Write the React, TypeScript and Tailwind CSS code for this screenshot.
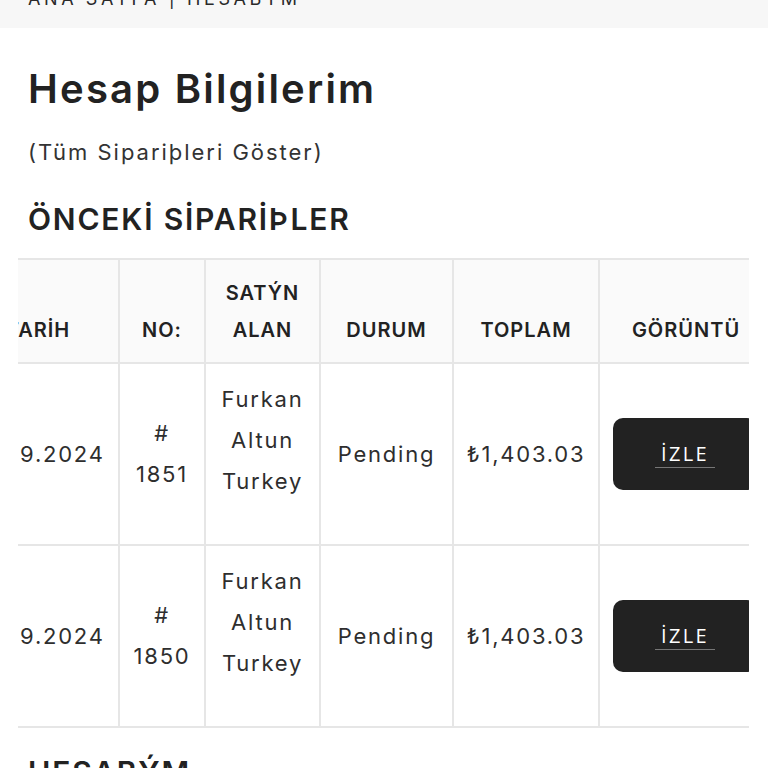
import { Fragment } from "react";

const orders = [
  { date: "18.09.2024", no: "1851", buyer: ["Furkan", "Altun", "Turkey"], status: "Pending", total: "₺1,403.03" },
  { date: "18.09.2024", no: "1850", buyer: ["Furkan", "Altun", "Turkey"], status: "Pending", total: "₺1,403.03" },
];

const headCell = "border-2 border-[#e6e6e6] bg-[#fafafa] px-[12px] pt-[14px] pb-[13px] align-bottom text-[20px] font-semibold uppercase leading-[37px] tracking-[0.05em] text-[#222]";
const bodyCell = "border-2 border-[#e6e6e6] px-[10px] py-[14px] text-center align-middle text-[22px] leading-[41px] tracking-[0.08em] text-[#2e2e2e]";

export default function App() {
  return (
    <div className="min-h-screen bg-white font-['Inter','Noto_Sans','DejaVu_Sans',sans-serif] text-[#222]">
      <div className="h-[28px] overflow-hidden bg-[#f7f7f7]">
        <p className="-mt-[10px] pl-[28px] text-[18px] leading-none tracking-[0.2em] text-[#2a2a2a]">ANA SAYFA | HESABÝM</p>
      </div>

      <main className="px-[28px] pt-[37px]">
        <h1 className="text-[40px] font-semibold leading-[48px] tracking-[0.055em] text-[#222]">Hesap Bilgilerim</h1>
        <p className="mt-[23px] text-[22px] leading-[33px] tracking-[0.09em] text-[#333]">(Tüm Sipariþleri Göster)</p>
        <h2 className="mt-[31px] text-[30px] font-semibold leading-[38px] tracking-[0.06em] text-[#222]">ÖNCEKİ SİPARİÞLER</h2>

        <div className="-ml-[10px] -mr-[9px] mt-[20px] overflow-hidden">
          <table className="-ml-[62px] w-[816px] table-fixed border-collapse border-t-2 border-[#e6e6e6]">
            <colgroup>
              <col className="w-[162px]" />
              <col className="w-[86px]" />
              <col className="w-[115px]" />
              <col className="w-[133px]" />
              <col className="w-[146px]" />
              <col className="w-[174px]" />
            </colgroup>
            <thead>
              <tr className="h-[104px]">
                <th className={headCell}>TARİH</th>
                <th className={headCell}>NO:</th>
                <th className={headCell}>SATÝN<br />ALAN</th>
                <th className={headCell}>DURUM</th>
                <th className={headCell}>TOPLAM</th>
                <th className={headCell}>GÖRÜNTÜ</th>
              </tr>
            </thead>
            <tbody>
              {orders.map((o) => (
                <tr key={o.no} className="h-[182px]">
                  <td className={bodyCell}>{o.date}</td>
                  <td className={bodyCell}>
                    <span className="block">#</span>
                    <span className="block">{o.no}</span>
                  </td>
                  <td className={`${bodyCell} pb-[42px]`}>
                    {o.buyer.map((line) => (
                      <Fragment key={line}>
                        <span className="block">{line}</span>
                      </Fragment>
                    ))}
                  </td>
                  <td className={bodyCell}>{o.status}</td>
                  <td className={`${bodyCell} tracking-[0.06em]`}>{o.total}</td>
                  <td className="border-2 border-[#e6e6e6] px-[13px] align-middle">
                    <button className="flex h-[72px] w-[144px] items-center justify-center rounded-[10px] bg-[#222] font-['Open_Sans',sans-serif] text-[20px] tracking-[0.12em] text-white">
                      <span className="border-b border-[#777] px-[6px] leading-[26px]">İZLE</span>
                    </button>
                  </td>
                </tr>
              ))}
            </tbody>
          </table>
        </div>

        <h2 className="mt-[25px] text-[30px] font-semibold leading-[38px] tracking-[0.06em] text-[#222]">HESABÝM</h2>
      </main>
    </div>
  );
}
